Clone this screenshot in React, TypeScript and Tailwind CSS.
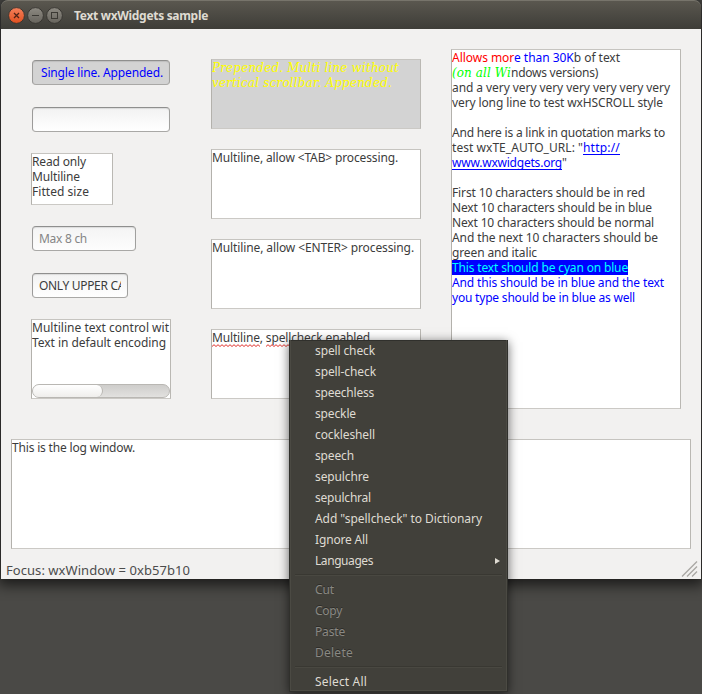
import { useLayoutEffect, useRef, useState } from "react";
import type { ReactNode } from "react";
import clsx from "clsx";

/** One line of text whose tracking is computed so that it ends a pixel short of `w`. */
function Fit({ w, className, children }: { w: number; className?: string; children: ReactNode }) {
  const ref = useRef<HTMLSpanElement>(null);
  const [spacing, setSpacing] = useState(0);
  useLayoutEffect(() => {
    const el = ref.current;
    if (!el) return;
    el.style.letterSpacing = "0px";
    const count = (el.textContent ?? "").length || 1;
    const value = (w - 1 - el.getBoundingClientRect().width) / count;
    el.style.letterSpacing = `${value}px`;
    setSpacing(value);
  }, [w]);
  return (
    <span
      ref={ref}
      className={clsx("inline-block whitespace-pre", className)}
      style={{ letterSpacing: `${spacing}px` }}
    >
      {children}
    </span>
  );
}

function Line({ w, className, children }: { w: number; className?: string; children?: ReactNode }) {
  return <div className="h-[15px] whitespace-pre">{children ? <Fit w={w} className={className}>{children}</Fit> : null}</div>;
}

function Box({ className, children }: { className?: string; children?: ReactNode }) {
  return (
    <div className={clsx("overflow-hidden border border-t-[#c6c4c0] border-r-[#bab8b3] border-b-[#cbc9c5] border-l-[#b3b1ac]", className)}>
      {children}
    </div>
  );
}

function Entry({ className, children }: { className?: string; children?: ReactNode }) {
  return (
    <div
      className={clsx(
        "ml-px flex h-[25px] items-center overflow-hidden rounded-[4px] border border-t-[#8f8f8e] border-r-[#a0a09e] border-b-[#a9a8a6] border-l-[#9c9b9a] shadow-[inset_0_1px_1px_rgba(0,0,0,0.1)]",
        className,
      )}
    >
      {children}
    </div>
  );
}

function Squiggle({ className, w }: { className: string; w: number }) {
  let d = "M0 2.5";
  for (let x = 2; x <= w; x += 2) d += ` L${x} ${(x / 2) % 2 ? 0.7 : 2.5}`;
  return (
    <svg className={clsx("absolute top-[14px]", className)} width={w} height="4" fill="none" stroke="#e0332e" strokeWidth="1">
      <path d={d} />
    </svg>
  );
}

function TitleBar() {
  return (
    <header className="flex h-[29px] items-center rounded-t-[7px] border-t border-[#77746b] bg-linear-to-b from-[#5a574f] to-[#3e3d38] pl-[7px] pt-px">
      <svg width="58" height="18" viewBox="0 0 58 18" fill="none">
        <defs>
          <linearGradient id="close" x1="0" y1="0" x2="0" y2="1">
            <stop offset="0" stopColor="#f4805b" />
            <stop offset="1" stopColor="#e2501f" />
          </linearGradient>
          <linearGradient id="plain" x1="0" y1="0" x2="0" y2="1">
            <stop offset="0" stopColor="#8d8a82" />
            <stop offset="1" stopColor="#67645d" />
          </linearGradient>
        </defs>
        <circle cx="8.5" cy="8.5" r="7.9" fill="url(#close)" stroke="#35332f" strokeWidth="0.9" />
        <circle cx="27.5" cy="8.5" r="7.9" fill="url(#plain)" stroke="#35332f" strokeWidth="0.9" />
        <circle cx="46.5" cy="8.5" r="7.9" fill="url(#plain)" stroke="#35332f" strokeWidth="0.9" />
        <path d="M6 6l5 5m0-5l-5 5" stroke="#502316" strokeWidth="1.3" />
        <path d="M24 8.5h7" stroke="#3b3934" strokeWidth="1" />
        <rect x="43.5" y="5.5" width="6" height="6" stroke="#3b3934" />
      </svg>
      <div className="ml-[8px] text-[12px] leading-[18px] font-bold text-[#dfdbd2]">
        <Fit w={135}>Text wxWidgets sample</Fit>
      </div>
    </header>
  );
}

const menuItems: { label?: string; w?: number; disabled?: boolean; sub?: boolean }[] = [
  { label: "spell check", w: 61 },
  { label: "spell-check", w: 62 },
  { label: "speechless", w: 60 },
  { label: "speckle", w: 42 },
  { label: "cockleshell", w: 61 },
  { label: "speech", w: 40 },
  { label: "sepulchre", w: 55 },
  { label: "sepulchral", w: 57 },
  { label: 'Add "spellcheck" to Dictionary', w: 168 },
  { label: "Ignore All", w: 54 },
  { label: "Languages", w: 59, sub: true },
  {},
  { label: "Cut", w: 20, disabled: true },
  { label: "Copy", w: 28, disabled: true },
  { label: "Paste", w: 31, disabled: true },
  { label: "Delete", w: 39, disabled: true },
  {},
  { label: "Select All", w: 53 },
];

function ContextMenu() {
  return (
    <div className="absolute top-[340px] left-[289px] h-[352px] w-[219px] border-x border-b border-[#30302c] bg-[#41403a] shadow-[0_2px_10px_rgba(0,0,0,0.6),inset_0_1px_0_#30302c]">
      <div className="h-[351px] border-x border-b border-[#4b4a43]">
        {menuItems.map((item, i) =>
          item.label ? (
            <div
              key={i}
              className={clsx(
                "flex h-[21px] items-center justify-between pr-[6px] pl-[24px]",
                item.disabled ? "text-[#8a8983] [text-shadow:0_-1px_0_#2d2c29]" : "text-[#dfdbd2]",
              )}
            >
              <Fit w={item.w ?? 0}>{item.label}</Fit>
              {item.sub && (
                <svg width="5" height="6" viewBox="0 0 5 6">
                  <path d="M0 0L5 3L0 6Z" fill="#dfdbd2" />
                </svg>
              )}
            </div>
          ) : (
            <div key={i} className="flex h-[8px] items-center px-[4px]">
              <div className="h-[2px] w-full border-t border-b border-t-[#393832] border-b-[#494841]" />
            </div>
          ),
        )}
      </div>
    </div>
  );
}

export default function App() {
  return (
    <div className="relative h-[694px] w-[702px] overflow-hidden bg-[#4a4946] px-px font-['Noto_Sans','Open_Sans',sans-serif] text-[12px] leading-[15px] text-[#3c3c3c]">
      <div className="h-[579px] w-[700px] rounded-t-[7px] shadow-[0_3px_14px_3px_rgba(0,0,0,0.65)]">
        <TitleBar />
        <main className="flex h-[550px] flex-col bg-[#f2f1f0]">
          <div className="flex h-[410px]">
            <section className="w-[210px] pt-[31px] pl-[30px]">
              <Entry className="w-[138px] bg-[#d3d3d3] pl-[8px] text-[#0000ff]">
                <Fit w={123}>Single line. Appended.</Fit>
              </Entry>
              <Entry className="mt-[22px] w-[138px] bg-linear-to-b from-[#f2f2f2] to-white" />
              <Box className="mt-[21px] h-[52px] w-[82px] bg-white">
                <Line w={55}>Read only</Line>
                <Line w={49}>Multiline</Line>
                <Line w={58}>Fitted size</Line>
              </Box>
              <Entry className="mt-[21px] w-[104px] bg-linear-to-b from-[#f4f4f4] to-[#fdfdfd] pl-[6px] text-[#858585]">
                <Fit w={49}>Max 8 ch</Fit>
              </Entry>
              <Entry className="mt-[22px] w-[96px] bg-linear-to-b from-[#f2f2f2] to-white pl-[6px]">
                <div className="w-[82px] overflow-hidden">
                  <Fit w={87}>ONLY UPPER CA</Fit>
                </div>
              </Entry>
              <Box className="mt-[21px] flex h-[80px] w-[140px] flex-col justify-between bg-white">
                <div>
                  <Line w={138}>Multiline text control wit</Line>
                  <Line w={135}>Text in default encoding</Line>
                </div>
                <div className="h-[14px] rounded-full border border-[#b9b7b3] bg-linear-to-b from-[#cecdcb] to-[#e2e1df]">
                  <div className="h-[12px] w-[70px] rounded-full border-r border-[#b9b7b3] bg-linear-to-b from-white to-[#efeeec]" />
                </div>
              </Box>
            </section>

            <section className="flex w-[240px] flex-col gap-[20px] pt-[30px]">
              <Box className="h-[70px] w-[210px] bg-[#d3d3d3] font-['DejaVu_Serif_Condensed','DejaVu_Serif',serif] text-[13.3px] text-[#ffff00] italic [font-stretch:condensed]">
                <Line w={188}>Prepended. Multi line without</Line>
                <Line w={181}>vertical scrollbar. Appended.</Line>
              </Box>
              <Box className="h-[70px] w-[210px] bg-white">
                <Line w={187}>Multiline, allow &lt;TAB&gt; processing.</Line>
              </Box>
              <Box className="h-[70px] w-[210px] bg-white">
                <Line w={203}>Multiline, allow &lt;ENTER&gt; processing.</Line>
              </Box>
              <Box className="relative h-[70px] w-[210px] bg-white">
                <Line w={159}>Multiline, spellcheck enabled</Line>
                <Squiggle className="left-0" w={49} />
                <Squiggle className="left-[54px]" w={60} />
              </Box>
            </section>

            <section className="pt-[20px]">
              <Box className="h-[360px] w-[230px] bg-white">
                <Line w={169}>
                  <span className="text-[#ff0000]">Allows mor</span>
                  <span className="text-[#0000ff]">e than 30K</span>b of text
                </Line>
                <div className="flex h-[15px] whitespace-pre">
                  <Fit w={60} className="font-['DejaVu_Serif_Condensed','DejaVu_Serif',serif] text-[13.3px] text-[#00ff00] italic [font-stretch:condensed]">(on all Wi</Fit>
                  <Fit w={88}>ndows versions)</Fit>
                </div>
                <Line w={219}>and a very very very very very very very</Line>
                <Line w={212}>very long line to test wxHSCROLL style</Line>
                <Line w={0} />
                <Line w={214}>And here is a link in quotation marks to</Line>
                <div className="flex h-[15px] whitespace-pre">
                  <Fit w={132}>test wxTE_AUTO_URL: "</Fit>
                  <Fit w={38} className="h-[15px] border-b border-[#0000ff] text-[#0000ff]">http://</Fit>
                </div>
                <div className="flex h-[15px] whitespace-pre">
                  <Fit w={111} className="h-[15px] border-b border-[#0000ff] text-[#0000ff]">www.wxwidgets.org</Fit>
                  <span>"</span>
                </div>
                <Line w={0} />
                <Line w={194}>First 10 characters should be in red</Line>
                <Line w={201}>Next 10 characters should be in blue</Line>
                <Line w={203}>Next 10 characters should be normal</Line>
                <Line w={207}>And the next 10 characters should be</Line>
                <Line w={86}>green and italic</Line>
                <Line w={177} className="bg-[#0000ff] text-[#00ffff]">This text should be cyan on blue</Line>
                <Line w={213} className="text-[#0000ff]">And this should be in blue and the text</Line>
                <Line w={184} className="text-[#0000ff]">you type should be in blue as well</Line>
              </Box>
            </section>
          </div>

          <Box className="ml-[10px] h-[110px] w-[680px] bg-white">
            <Line w={124}>This is the log window.</Line>
          </Box>

          <footer className="flex h-[30px] items-end justify-between pr-[3px] pl-[5px]">
            <div className="mb-px text-[13px] leading-[16px] text-[#4c4c4c]">
              <Fit w={185}>Focus: wxWindow = 0xb57b10</Fit>
            </div>
            <svg className="mb-[2px]" width="17" height="16" viewBox="0 0 17 16" stroke="#aaa8a4" strokeWidth="1.4">
              <path d="M1 15.5L16 0.5M6 15.5L16 5.5M11 15.5L16 10.5" />
            </svg>
          </footer>
        </main>
      </div>
      <ContextMenu />
    </div>
  );
}
